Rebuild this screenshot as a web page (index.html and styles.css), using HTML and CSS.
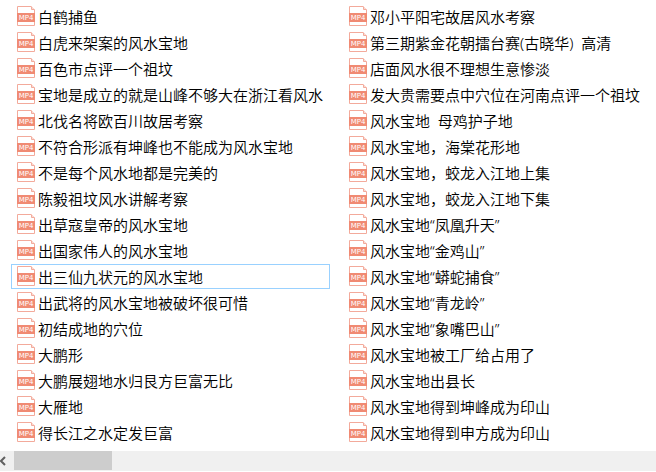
FILE: index.html
```html
<!DOCTYPE html>
<html lang="zh-CN">
<head>
    <meta charset="UTF-8">
    <meta name="viewport" content="width=device-width, initial-scale=1.0">
    <title>文件列表</title>
    <link rel="stylesheet" href="styles.css">
</head>
<body>
    <svg class="icon-defs" aria-hidden="true">
        <symbol id="mp4" viewBox="0 0 18 20">
            <path d="M.5 .5H14L17.5 4V19.5H.5Z" fill="#fff" stroke="#f3aa9b"/>
            <path d="M14.5 .5V3.5H17.5" fill="#fbd9d1" stroke="#f3aa9b"/>
            <rect x="0" y="7" width="18" height="9" fill="#f08a73"/>
            <text x="9" y="14" text-anchor="middle" class="icon-text">MP4</text>
        </symbol>
    </svg>

    <main class="file-view">
        <ul class="file-list">
            <li class="file"><svg class="file-icon"><use href="#mp4"/></svg><span>白鹤捕鱼</span></li>
            <li class="file"><svg class="file-icon"><use href="#mp4"/></svg><span>白虎来架案的风水宝地</span></li>
            <li class="file"><svg class="file-icon"><use href="#mp4"/></svg><span>百色市点评一个祖坟</span></li>
            <li class="file"><svg class="file-icon"><use href="#mp4"/></svg><span>宝地是成立的就是山峰不够大在浙江看风水</span></li>
            <li class="file"><svg class="file-icon"><use href="#mp4"/></svg><span>北伐名将欧百川故居考察</span></li>
            <li class="file"><svg class="file-icon"><use href="#mp4"/></svg><span>不符合形派有坤峰也不能成为风水宝地</span></li>
            <li class="file"><svg class="file-icon"><use href="#mp4"/></svg><span>不是每个风水地都是完美的</span></li>
            <li class="file"><svg class="file-icon"><use href="#mp4"/></svg><span>陈毅祖坟风水讲解考察</span></li>
            <li class="file"><svg class="file-icon"><use href="#mp4"/></svg><span>出草寇皇帝的风水宝地</span></li>
            <li class="file"><svg class="file-icon"><use href="#mp4"/></svg><span>出国家伟人的风水宝地</span></li>
            <li class="file focused"><svg class="file-icon"><use href="#mp4"/></svg><span>出三仙九状元的风水宝地</span></li>
            <li class="file"><svg class="file-icon"><use href="#mp4"/></svg><span>出武将的风水宝地被破坏很可惜</span></li>
            <li class="file"><svg class="file-icon"><use href="#mp4"/></svg><span>初结成地的穴位</span></li>
            <li class="file"><svg class="file-icon"><use href="#mp4"/></svg><span>大鹏形</span></li>
            <li class="file"><svg class="file-icon"><use href="#mp4"/></svg><span>大鹏展翅地水归艮方巨富无比</span></li>
            <li class="file"><svg class="file-icon"><use href="#mp4"/></svg><span>大雁地</span></li>
            <li class="file"><svg class="file-icon"><use href="#mp4"/></svg><span>得长江之水定发巨富</span></li>
            <li class="file"><svg class="file-icon"><use href="#mp4"/></svg><span>邓小平阳宅故居风水考察</span></li>
            <li class="file"><svg class="file-icon"><use href="#mp4"/></svg><span>第三期紫金花朝擂台赛(古晓华)  高清</span></li>
            <li class="file"><svg class="file-icon"><use href="#mp4"/></svg><span>店面风水很不理想生意惨淡</span></li>
            <li class="file"><svg class="file-icon"><use href="#mp4"/></svg><span>发大贵需要点中穴位在河南点评一个祖坟</span></li>
            <li class="file"><svg class="file-icon"><use href="#mp4"/></svg><span>风水宝地  母鸡护子地</span></li>
            <li class="file"><svg class="file-icon"><use href="#mp4"/></svg><span>风水宝地，海棠花形地</span></li>
            <li class="file"><svg class="file-icon"><use href="#mp4"/></svg><span>风水宝地，蛟龙入江地上集</span></li>
            <li class="file"><svg class="file-icon"><use href="#mp4"/></svg><span>风水宝地，蛟龙入江地下集</span></li>
            <li class="file"><svg class="file-icon"><use href="#mp4"/></svg><span>风水宝地“凤凰升天”</span></li>
            <li class="file"><svg class="file-icon"><use href="#mp4"/></svg><span>风水宝地“金鸡山”</span></li>
            <li class="file"><svg class="file-icon"><use href="#mp4"/></svg><span>风水宝地“蟒蛇捕食”</span></li>
            <li class="file"><svg class="file-icon"><use href="#mp4"/></svg><span>风水宝地“青龙岭”</span></li>
            <li class="file"><svg class="file-icon"><use href="#mp4"/></svg><span>风水宝地“象嘴巴山”</span></li>
            <li class="file"><svg class="file-icon"><use href="#mp4"/></svg><span>风水宝地被工厂给占用了</span></li>
            <li class="file"><svg class="file-icon"><use href="#mp4"/></svg><span>风水宝地出县长</span></li>
            <li class="file"><svg class="file-icon"><use href="#mp4"/></svg><span>风水宝地得到坤峰成为印山</span></li>
            <li class="file"><svg class="file-icon"><use href="#mp4"/></svg><span>风水宝地得到申方成为印山</span></li>
        </ul>
    </main>

    <div class="scrollbar">
        <button class="scroll-left" type="button" aria-label="向左滚动">
            <svg width="6" height="10" viewBox="0 0 6 10"><path d="M5 1L1 5L5 9" fill="none" stroke="#606060" stroke-width="2"/></svg>
        </button>
        <div class="scroll-thumb"></div>
    </div>
</body>
</html>
```
FILE: styles.css
```css
body {
    margin: 0;
    background-color: #fff;
    color: #000;
    font-family: "Noto Sans", "Noto Sans CJK SC", sans-serif;
    font-size: 15px;
    font-weight: 350;
    overflow: hidden;
}
.icon-defs {
    display: none;
}
.icon-text {
    font-family: "DejaVu Sans", sans-serif;
    font-size: 7px;
    font-weight: normal;
    fill: #fff;
}

/* --- File list --- */
.file-view {
    padding: 4px 0 6px 11px;
    overflow: hidden;
}
.file-list {
    display: grid;
    grid-auto-flow: column;
    grid-template-rows: repeat(17, 25px);
    grid-auto-columns: 319px;
    gap: 1px 13px;
    margin: 0;
    padding: 0;
    list-style: none;
}
.file {
    display: flex;
    align-items: flex-start;
    gap: 3px;
    box-sizing: border-box;
    padding: 1px 5px 0;
    border: 1px solid transparent;
    line-height: 22px;
    white-space: pre;
}
.file.focused {
    border-color: #99d1ff;
}
.file-icon {
    flex: none;
    width: 18px;
    height: 20px;
}

/* --- Horizontal scrollbar --- */
.scrollbar {
    display: flex;
    height: 20px;
    background-color: #f0f0f0;
}
.scroll-left {
    display: flex;
    align-items: center;
    width: 14px;
    padding: 0;
    border: none;
    background: none;
}
.scroll-thumb {
    width: 15%;
    height: 19px;
    background-color: #cdcdcd;
}
```
